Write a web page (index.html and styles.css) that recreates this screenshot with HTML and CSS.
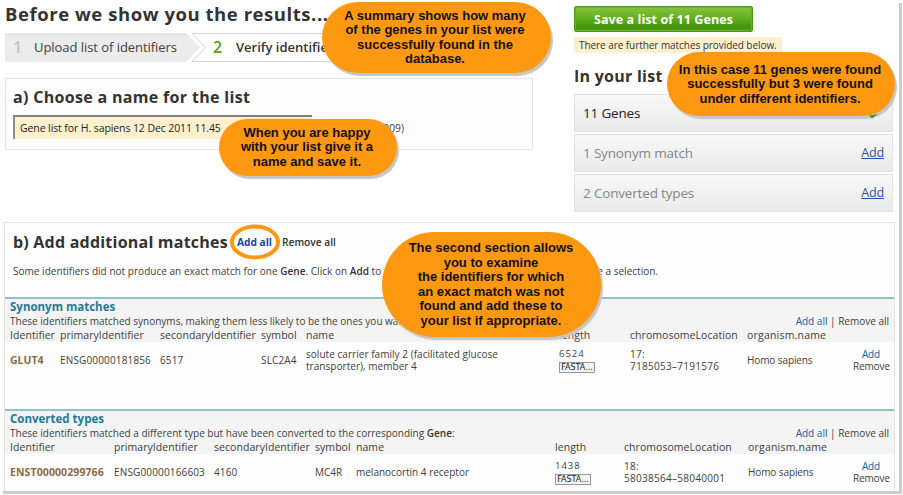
FILE: index.html
```html
<!DOCTYPE html>
<html lang="en">
<head>
<meta charset="utf-8">
<title>Before we show you the results...</title>
<link rel="stylesheet" href="styles.css">
</head>
<body>
<div class="page">
  <div class="top">
    <main class="left">
      <h1>Before we show you the results...</h1>
      <div class="steps">
        <svg class="steps-bg" width="500" height="30" viewBox="0 0 500 30">
          <defs><linearGradient id="sg" x1="0" y1="0" x2="0" y2="1"><stop offset="0" stop-color="#e6e6e6"/><stop offset=".25" stop-color="#ececec"/><stop offset="1" stop-color="#ebebeb"/></linearGradient></defs>
          <path d="M0 0H181L195 14.5L181 29H0Z" fill="url(#sg)"/>
          <path d="M500 .5H187L200.500 14.500L187 28.500H500" fill="#fff" stroke="#d6d6d6"/>
        </svg>
        <span class="num">1</span><span class="step">Upload list of identifiers</span>
        <span class="num num-on">2</span><span class="step step-on">Verify identifiers</span>
      </div>
      <section class="name-box">
        <h2>a) Choose a name for the list</h2>
        <div class="name-row"><div class="field">Gene list for H. sapiens 12 Dec 2011 11.45</div><span class="hint">2009)</span></div>
      </section>
    </main>
    <aside class="right">
      <div class="save"><span>Save a list of 11 Genes</span></div>
      <div class="note"><span>There are further matches provided below.</span></div>
      <h2 class="in-list">In your list</h2>
      <div class="item item-on"><span>11 Genes</span><svg class="check" width="12" height="8" viewBox="0 0 12 8"><path d="M1 3.500L4 6.500L10 2L5 3Z" fill="#3c9a2e"/></svg></div>
      <div class="item"><span class="syn">1 Synonym match</span><a>Add</a></div>
      <div class="item"><span class="conv">2 Converted types</span><a>Add</a></div>
    </aside>
  </div>

  <section class="matches">
    <div class="m-head"><h2>b) Add additional matches</h2><a class="add-all">Add all<svg class="ring" width="52" height="36" viewBox="0 0 52 36"><ellipse cx="26" cy="18" rx="23" ry="15.500" fill="none" stroke="#ff9811" stroke-width="4"/></svg></a><span class="rem-all">Remove all</span></div>
    <p class="intro"><span class="intro-a">Some identifiers did not produce an exact match for one <b>Gene</b>. Click on <b>Add</b> to</span><span>make a selection.</span></p>

    <div class="group">
      <div class="g-head">
        <h3>Synonym matches</h3>
        <div class="desc"><span class="desc-a">These identifiers matched synonyms, making them less likely to be the ones you want:</span><span class="links"><a>Add all</a> | Remove all</span></div>
        <div class="row cols-a labels"><span>Identifier</span><span>primaryIdentifier</span><span>secondaryIdentifier</span><span>symbol</span><span>name</span><span>length</span><span>chromosomeLocation</span><span class="org-l">organism.name</span></div>
      </div>
      <div class="row cols-a data"><b>GLUT4</b><span class="id">ENSG00000181856</span><span class="id">6517</span><span class="id">SLC2A4</span><span class="nm">solute carrier family 2 (facilitated glucose<br>transporter), member 4</span><span class="len">6524<i>FASTA...</i></span><span class="loc">17:<br>7185053–7191576</span><span class="org">Homo sapiens</span><span class="act"><a>Add</a><br>Remove</span></div>
    </div>

    <div class="group second">
      <div class="g-head">
        <h3>Converted types</h3>
        <div class="desc"><span class="desc-b">These identifiers matched a different type but have been converted to the corresponding <b>Gene</b>:</span><span class="links"><a>Add all</a> | Remove all</span></div>
        <div class="row cols-b labels"><span>Identifier</span><span>primaryIdentifier</span><span>secondaryIdentifier</span><span>symbol</span><span>name</span><span>length</span><span>chromosomeLocation</span><span class="org-l">organism.name</span></div>
      </div>
      <div class="row cols-b data"><b class="enst">ENST00000299766</b><span class="id">ENSG00000166603</span><span class="id">4160</span><span>MC4R</span><span>melanocortin 4 receptor</span><span class="len">1438<i>FASTA...</i></span><span class="loc">18:<br>58038564–58040001</span><span class="org">Homo sapiens</span><span class="act"><a>Add</a><br>Remove</span></div>
    </div>
  </section>
</div>

<div class="callout c1">A summary shows how many<br>of the genes in your list were<br>successfully found in the<br>database.</div>
<div class="callout c2">When you are happy<br>with your list give it a<br>name and save it.</div>
<div class="callout c3">In this case 11 genes were found<br>successfully but 3 were found<br>under different identifiers.</div>
<div class="callout c4">The second section allows<br>you to examine<br>the identifiers for which<br>an exact match was not<br>found and add these to<br>your list if appropriate.</div>
<div class="shade-right"></div>
<div class="shade-bottom"></div>
</body>
</html>
```
FILE: styles.css
```css
* { box-sizing: border-box; }
body { margin: 0; background: #fff; color: #404040; font: 10px/13px "Open Sans", "Noto Sans", sans-serif; overflow: hidden; }
h1, h2, h3, p { margin: 0; }
h1, h2 { color: #333; font-weight: 700; white-space: nowrap; }
span, b, a { white-space: nowrap; }
a { color: #1e56a8; }
.page { width: 903px; height: 495px; overflow: hidden; padding-left: 4px; }
.top { display: flex; height: 222px; }
.left { width: 570px; padding-left: 1px; }
h1 { height: 33px; font-size: 18.500px; line-height: 27px; letter-spacing: .55px; }

.steps { position: relative; display: flex; height: 29px; line-height: 29px; font-size: 13px; align-items: center; }
.steps-bg { position: absolute; left: 0; top: 0; }
.steps span { position: relative; }
.num { width: 21px; margin-left: 8px; font-size: 16px; font-weight: 600; color: #c4c4c4; }
.step { width: 171px; letter-spacing: -.05px; }
.num-on { width: 23px; color: #56a30d; }
.step-on { font-weight: 600; color: #333; letter-spacing: 0; }

.name-box { width: 528px; height: 72px; margin-top: 16px; padding: 6px 0 0 7px; background: #fdfdfd; border: 1px solid #e4e4e4; }
.name-box h2 { font-size: 16px; line-height: 24px; letter-spacing: .32px; }
.name-row { display: flex; margin-top: 6px; }
.field { width: 299px; height: 24px; padding-left: 5px; line-height: 23px; font-size: 10.500px; letter-spacing: -.1px; color: #222; background: #fff0cd; border-top: 2px solid #808080; border-left: 2px solid #8b8b8b; white-space: nowrap; }
.hint { width: 92px; line-height: 27px; font-size: 10.300px; text-align: right; }

.right { width: 319px; padding-top: 6px; }
.save { width: 179px; height: 26px; padding-left: 19px; border: 1px solid #4c9a14; border-radius: 2px; background: linear-gradient(#86c440, #5fae1c 50%, #469610 80%, #4d9b10); box-shadow: inset 0 0 0 1px #68b025; color: #fff; font-size: 12.500px; font-weight: 700; line-height: 25px; letter-spacing: .08px; white-space: nowrap; }
.note { width: 208px; height: 16px; margin-top: 5px; padding-left: 5px; line-height: 16px; letter-spacing: -.06px; color: #333; background: #fff0cd; }
.in-list { height: 41px; padding-top: 11px; font-size: 16px; line-height: 25px; letter-spacing: .25px; }
.item { display: flex; justify-content: space-between; height: 38px; margin-bottom: 2px; padding: 0 8px; border: 1px solid #e2e2e2; background: linear-gradient(#f8f8f8, #eaeaea); font-size: 13.500px; line-height: 36px; letter-spacing: -.17px; color: #858585; }
.item-on { color: #222; }
.item a { text-decoration: underline; line-height: 35px; font-size: 12.500px; }
.check { position: relative; z-index: 2; margin: 17px 4px 0 0; }

.matches { width: 891px; height: 269px; border: 1px solid #e2e2e2; border-bottom: 0; background: #fdfdfd; }
.m-head { display: flex; padding: 2px 0 0 8px; height: 36px; align-items: center; line-height: 36px; font-size: 10.200px; font-weight: 600; color: #333; }
.m-head h2 { width: 224px; font-size: 16px; letter-spacing: .22px; }
.add-all { position: relative; width: 45px; color: #1746a0; font-weight: 700; }
.ring { position: absolute; left: -8px; top: 0; }
.intro { display: flex; padding-left: 8px; height: 38px; line-height: 24px; letter-spacing: .03px; }
.intro-a { width: 564px; }
b { font-weight: 600; color: #333; }
.group { border-top: 2px solid #93bfce; height: 112px; }
.g-head { height: 43px; padding-left: 5px; background: #f4f4f4; border-bottom: 1px solid #ecf6fb; }
h3 { height: 16px; font-size: 11.500px; line-height: 16px; font-weight: 700; color: #1f7b97; white-space: nowrap; }
.desc { display: flex; justify-content: space-between; height: 13px; line-height: 12px; padding-right: 5px; }
.row { display: grid; align-items: center; }
.labels { line-height: 14px; font-size: 10.500px; letter-spacing: .05px; }
.cols-a { grid-template-columns: 50px 100px 101px 45px 253px 71px 117px 106px 36px; }
.cols-b { grid-template-columns: 104px 100px 101px 41px 199px 69px 124px 105px 36px; }
.data { height: 36px; padding-left: 5px; line-height: 12px; }
.data b { color: #8a6a46; font-weight: 700; font-size: 10.500px; }
.data .enst { letter-spacing: .1px; }
.id { letter-spacing: .15px; }
.nm { letter-spacing: .04px; }
.loc { letter-spacing: .28px; }
.org { letter-spacing: -.1px; }
.org-l { letter-spacing: .2px; }
.act { text-align: center; letter-spacing: -.15px; }
.len { display: block; font-size: 9.500px; letter-spacing: 1px; }
.len i { display: block; width: 36px; height: 11px; margin-top: 2px; border: 1px solid #999; background: #f2f2f2; font: 8px/9px "DejaVu Sans", sans-serif; letter-spacing: 0; text-align: center; color: #222; }

.callout { position: absolute; background: #ff9811; box-shadow: 2px 3px 1px #c6c6c6; color: #111; font: bold 13px/14.300px "Liberation Sans", Arial, sans-serif; text-align: center; white-space: nowrap; }
.c1 { left: 322px; top: 2px; width: 229px; height: 71px; padding: 7px 3px 0 0; border-radius: 36px; }
.c2 { left: 219px; top: 119px; width: 178px; height: 57px; padding: 7px 2px 0 0; border-radius: 29px; }
.c3 { left: 667px; top: 52px; width: 228px; height: 64px; padding: 11px 2px 0 0; border-radius: 32px; }
.c4 { left: 382px; top: 232px; width: 219px; height: 105px; padding: 9px 1px 0 0; border-radius: 53px; line-height: 14.500px; }
.shade-right { position: absolute; left: 899px; top: 3px; width: 3px; height: 491px; background: #ccc; }
.shade-bottom { position: absolute; left: 3px; top: 491px; width: 899px; height: 3px; background: #ccc; }
```
